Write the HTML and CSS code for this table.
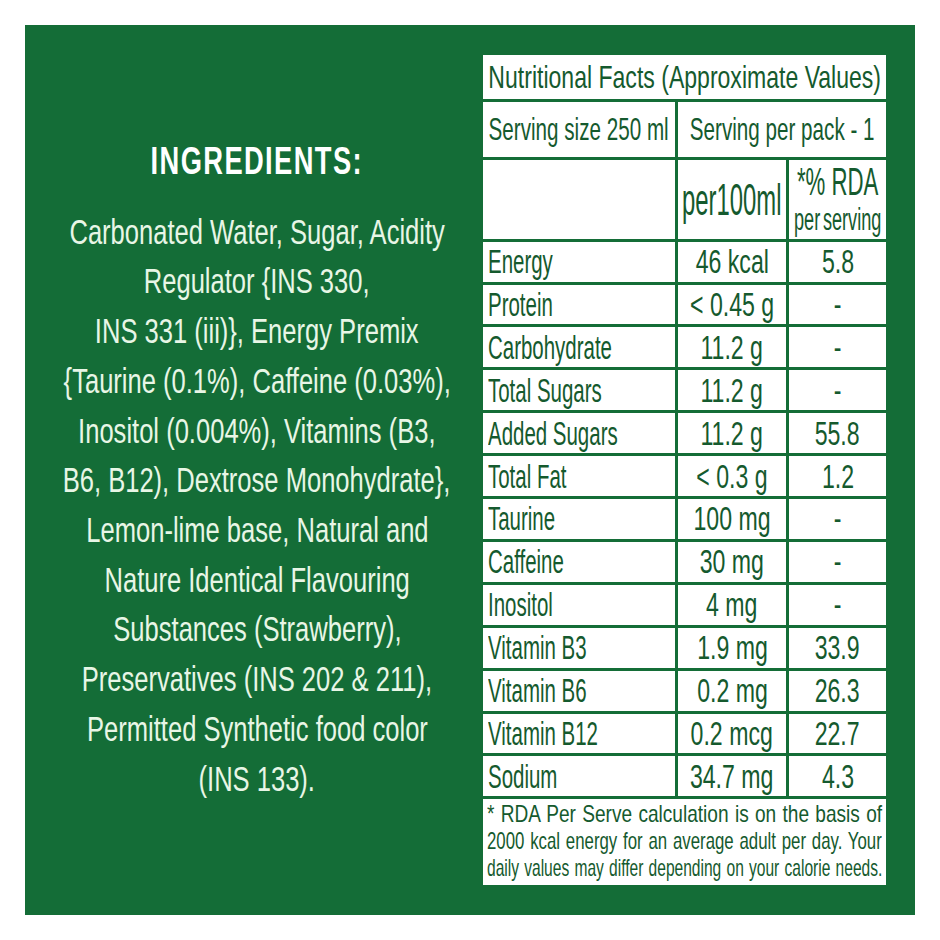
FILE: index.html
```html
<!DOCTYPE html>
<html lang="en">
<head>
<meta charset="utf-8">
<title>Ingredients and Nutritional Facts</title>
<link rel="stylesheet" href="styles.css">
</head>
<body>
<div class="panel">
  <section class="ingredients">
    <h2 class="ing-title"><span class="t">INGREDIENTS:</span></h2>
    <div class="ing-text">
      <span class="line">Carbonated Water, Sugar, Acidity</span>
      <span class="line">Regulator {INS 330,</span>
      <span class="line">INS 331 (iii)}, Energy Premix</span>
      <span class="line">{Taurine (0.1%), Caffeine (0.03%),</span>
      <span class="line">Inositol (0.004%), Vitamins (B3,</span>
      <span class="line">B6, B12), Dextrose Monohydrate},</span>
      <span class="line">Lemon-lime base, Natural and</span>
      <span class="line">Nature Identical Flavouring</span>
      <span class="line">Substances (Strawberry),</span>
      <span class="line">Preservatives (INS 202 &amp; 211),</span>
      <span class="line">Permitted Synthetic food color</span>
      <span class="line">(INS 133).</span>
    </div>
  </section>
  <section class="facts">
    <div class="cell title"><span class="t">Nutritional Facts (Approximate Values)</span></div>
    <div class="cell serving"><span class="t">Serving size 250 ml</span></div>
    <div class="cell serving span2"><span class="t">Serving per pack - 1</span></div>
    <div class="cell head"></div>
    <div class="cell head per100"><span class="t">per100ml</span></div>
    <div class="cell head rda"><span class="t rda-top">*% RDA</span><span class="t rda-sub">per serving</span></div>

    <div class="cell name"><span class="t">Energy</span></div><div class="cell val"><span class="t">46 kcal</span></div><div class="cell val"><span class="t">5.8</span></div>
    <div class="cell name"><span class="t">Protein</span></div><div class="cell val"><span class="t">&lt; 0.45 g</span></div><div class="cell val"><span class="t">-</span></div>
    <div class="cell name"><span class="t">Carbohydrate</span></div><div class="cell val"><span class="t">11.2 g</span></div><div class="cell val"><span class="t">-</span></div>
    <div class="cell name"><span class="t">Total Sugars</span></div><div class="cell val"><span class="t">11.2 g</span></div><div class="cell val"><span class="t">-</span></div>
    <div class="cell name"><span class="t">Added Sugars</span></div><div class="cell val"><span class="t">11.2 g</span></div><div class="cell val"><span class="t">55.8</span></div>
    <div class="cell name"><span class="t">Total Fat</span></div><div class="cell val"><span class="t">&lt; 0.3 g</span></div><div class="cell val"><span class="t">1.2</span></div>
    <div class="cell name"><span class="t">Taurine</span></div><div class="cell val"><span class="t">100 mg</span></div><div class="cell val"><span class="t">-</span></div>
    <div class="cell name"><span class="t">Caffeine</span></div><div class="cell val"><span class="t">30 mg</span></div><div class="cell val"><span class="t">-</span></div>
    <div class="cell name"><span class="t">Inositol</span></div><div class="cell val"><span class="t">4 mg</span></div><div class="cell val"><span class="t">-</span></div>
    <div class="cell name"><span class="t">Vitamin B3</span></div><div class="cell val"><span class="t">1.9 mg</span></div><div class="cell val"><span class="t">33.9</span></div>
    <div class="cell name"><span class="t">Vitamin B6</span></div><div class="cell val"><span class="t">0.2 mg</span></div><div class="cell val"><span class="t">26.3</span></div>
    <div class="cell name"><span class="t">Vitamin B12</span></div><div class="cell val"><span class="t">0.2 mcg</span></div><div class="cell val"><span class="t">22.7</span></div>
    <div class="cell name"><span class="t">Sodium</span></div><div class="cell val"><span class="t">34.7 mg</span></div><div class="cell val"><span class="t">4.3</span></div>

    <div class="cell note">
      <div class="fl fl1">* RDA Per Serve calculation is on the basis of</div>
      <div class="fl fl2">2000 kcal energy for an average adult per day. Your</div>
      <div class="fl fl3">daily values may differ depending on your calorie needs.</div>
    </div>
  </section>
</div>
</body>
</html>
```
FILE: styles.css
```css
html, body {
  margin: 0;
  padding: 0;
  background: #ffffff;
}

body {
  font-family: "Liberation Sans", Arial, sans-serif;
}

.panel {
  margin: 25px;
  width: 890px;
  height: 890px;
  box-sizing: border-box;
  background: #146d37;
  display: grid;
  grid-template-columns: 434px 403px;
  column-gap: 9px;
  padding: 0 29px 0 15px;
  align-items: center;
}

/* condensed text: glyphs squeezed horizontally */
.t {
  display: inline-block;
  white-space: nowrap;
  transform-origin: center center;
}

/* ---------- ingredients ---------- */
.ingredients {
  display: flex;
  flex-direction: column;
  align-items: center;
  padding-top: 2px;
}

.ing-title {
  margin: 0 0 24px 0;
  display: flex;
  justify-content: center;
  font-size: 39px;
  font-weight: bold;
  letter-spacing: 2px;
  line-height: 44px;
  color: #ffffff;
}

.ing-title .t {
  transform: scaleX(0.7);
}

.ing-text {
  display: flex;
  flex-direction: column;
  align-items: center;
  font-size: 35px;
  line-height: 49.7px;
  color: #e8f6e6;
}

.line {
  display: block;
  white-space: nowrap;
  transform: scaleX(0.73);
  transform-origin: center center;
}

/* ---------- nutrition table ---------- */
.facts {
  display: grid;
  grid-template-columns: 192px 108px 97px;
  grid-template-rows: 44px 55px 79px repeat(13, 39.9px) 86px;
  gap: 3px;
  color: #155a2e;
}

.cell {
  background: #ffffff;
  display: flex;
  align-items: center;
  justify-content: center;
  font-size: 33px;
  line-height: 1;
  white-space: nowrap;
}

.title {
  grid-column: 1 / 4;
  font-size: 32px;
}

.title .t {
  transform: scaleX(0.72);
}

.serving {
  font-size: 32px;
}

.serving .t {
  transform: scaleX(0.645);
}

.span2 {
  grid-column: 2 / 4;
}

.per100 {
  font-size: 45px;
}

.per100 .t {
  transform: scaleX(0.53);
}

.rda {
  flex-direction: column;
}

.rda-top {
  font-size: 38px;
  line-height: 42.5px;
  transform: scaleX(0.585);
}

.rda-sub {
  font-size: 31px;
  line-height: 34.7px;
  word-spacing: -4px;
  transform: scaleX(0.585);
}

.name {
  justify-content: flex-start;
  padding-left: 5px;
}

.name .t {
  transform: scaleX(0.62);
  transform-origin: left center;
}

.val .t {
  transform: scaleX(0.7);
}

.note {
  grid-column: 1 / 4;
  display: block;
  white-space: normal;
  font-size: 24px;
  line-height: 27px;
  padding: 1px 4px 0 4px;
}

.fl {
  transform-origin: left center;
  text-align: justify;
  text-align-last: justify;
}

.fl1 {
  width: 497px;
  transform: scaleX(0.795);
}

.fl2 {
  width: 564px;
  transform: scaleX(0.7);
}

.fl3 {
  width: 610px;
  transform: scaleX(0.648);
}
```
